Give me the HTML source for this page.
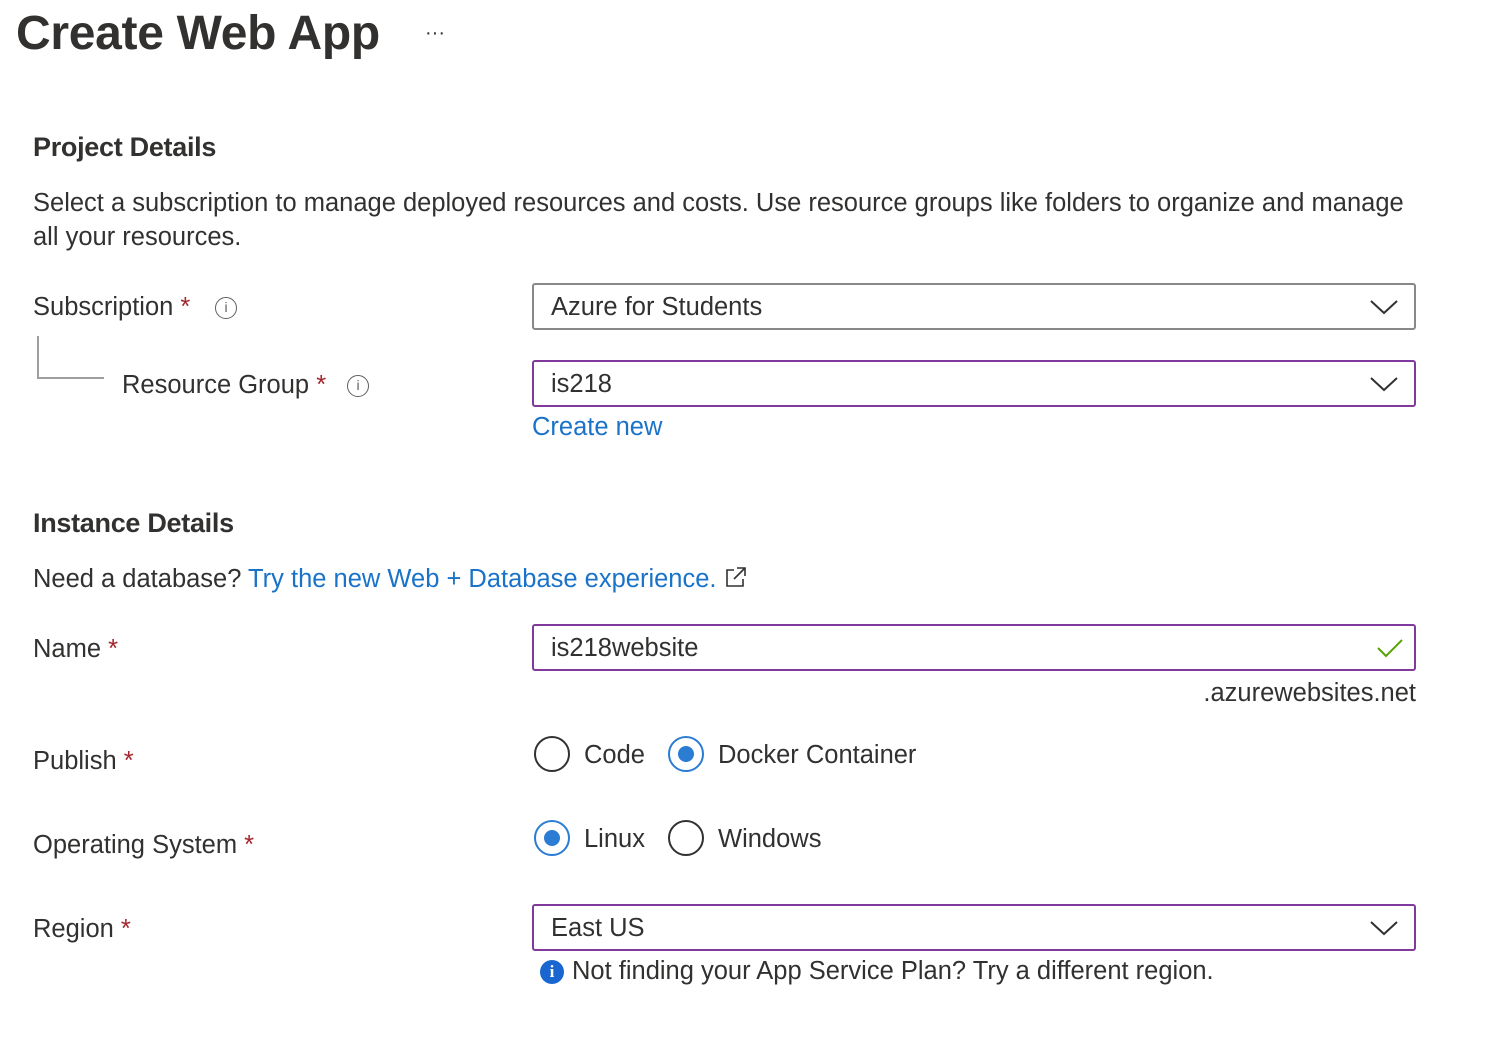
<!DOCTYPE html>
<html><head><meta charset="utf-8"><style>
*{margin:0;padding:0;box-sizing:border-box}
body{width:1504px;height:1044px;background:#fff;font-family:"Liberation Sans",sans-serif;color:#323130;position:relative;overflow:hidden}
.t{position:absolute;white-space:nowrap;font-size:25.5px;line-height:30px}
.h{font-weight:bold;font-size:27px;letter-spacing:-0.3px}
.req{color:#a4262c}
.link{color:#1a73c8}
.box{position:absolute;left:532px;width:884px;height:47px;border:2px solid #7f3a9c;border-radius:3px}
.box.g{border:2px solid #8a8886}
.box span{position:absolute;left:17px;top:7px;font-size:25.5px;line-height:30px}
.chev{position:absolute;right:16px;top:14px}
.info{position:absolute;width:22px;height:22px;border:1.5px solid #605e5c;border-radius:50%;font-size:14px;text-align:center;line-height:19px;color:#605e5c;font-family:"Liberation Sans",sans-serif}
.radio{position:absolute;width:36px;height:36px;border:2px solid #323130;border-radius:50%}
.radio.on{border-color:#2b7cd3}
.radio.on::after{content:"";position:absolute;left:8px;top:8px;width:16px;height:16px;border-radius:50%;background:#2b7cd3}
</style></head><body>
<div class="t" style="left:16px;top:6px;font-size:48px;font-weight:bold;line-height:56px;letter-spacing:-0.3px">Create Web App</div>
<div class="t" style="left:425px;top:18px;font-size:20px">···</div>

<div class="t h" style="left:33px;top:132px">Project Details</div>
<div class="t" style="left:33px;top:188px">Select a subscription to manage deployed resources and costs. Use resource groups like folders to organize and manage</div>
<div class="t" style="left:33px;top:222px">all your resources.</div>

<div class="t" style="left:33px;top:292px">Subscription <span class="req">*</span></div>
<div class="info" style="left:215px;top:297px">i</div>
<div style="position:absolute;left:37px;top:336px;width:67px;height:43px;border-left:2px solid #a19f9d;border-bottom:2px solid #a19f9d"></div>
<div class="t" style="left:122px;top:370px">Resource Group <span class="req">*</span></div>
<div class="info" style="left:347px;top:375px">i</div>

<div class="box g" style="top:283px"><span>Azure for Students</span><svg class="chev" width="28" height="16"><path d="M1 2 L14 14 L27 2" fill="none" stroke="#323130" stroke-width="2"/></svg></div>
<div class="box" style="top:360px"><span>is218</span><svg class="chev" width="28" height="16"><path d="M1 2 L14 14 L27 2" fill="none" stroke="#323130" stroke-width="2"/></svg></div>
<div class="t link" style="left:532px;top:412px">Create new</div>

<div class="t h" style="left:33px;top:508px">Instance Details</div>
<div class="t" style="left:33px;top:564px">Need a database? <span class="link">Try the new Web + Database experience.</span><svg style="margin-left:8px;vertical-align:-1px" width="22" height="22"><path d="M9 4 H2 V20 H18 V13 M12 2 H20 V10 M20 2 L9 13" fill="none" stroke="#323130" stroke-width="1.6"/></svg></div>

<div class="t" style="left:33px;top:634px">Name <span class="req">*</span></div>
<div class="box" style="top:624px"><span>is218website</span><svg class="chev" width="28" height="20" style="top:12px;right:10px"><path d="M2 10 L10 18 L26 2" fill="none" stroke="#57a300" stroke-width="2"/></svg></div>
<div class="t" style="right:88px;top:678px">.azurewebsites.net</div>

<div class="t" style="left:33px;top:746px">Publish <span class="req">*</span></div>
<div class="radio" style="left:534px;top:736px"></div>
<div class="t" style="left:584px;top:740px">Code</div>
<div class="radio on" style="left:668px;top:736px"></div>
<div class="t" style="left:718px;top:740px">Docker Container</div>

<div class="t" style="left:33px;top:830px">Operating System <span class="req">*</span></div>
<div class="radio on" style="left:534px;top:820px"></div>
<div class="t" style="left:584px;top:824px">Linux</div>
<div class="radio" style="left:668px;top:820px"></div>
<div class="t" style="left:718px;top:824px">Windows</div>

<div class="t" style="left:33px;top:914px">Region <span class="req">*</span></div>
<div class="box" style="top:904px"><span>East US</span><svg class="chev" width="28" height="16"><path d="M1 2 L14 14 L27 2" fill="none" stroke="#323130" stroke-width="2"/></svg></div>
<div style="position:absolute;left:540px;top:960px;width:24px;height:24px;border-radius:50%;background:#1a66d0;color:#fff;font-weight:bold;font-size:17px;text-align:center;line-height:24px;font-family:'Liberation Serif',serif">i</div>
<div class="t" style="left:572px;top:956px">Not finding your App Service Plan? Try a different region.</div>
</body></html>
